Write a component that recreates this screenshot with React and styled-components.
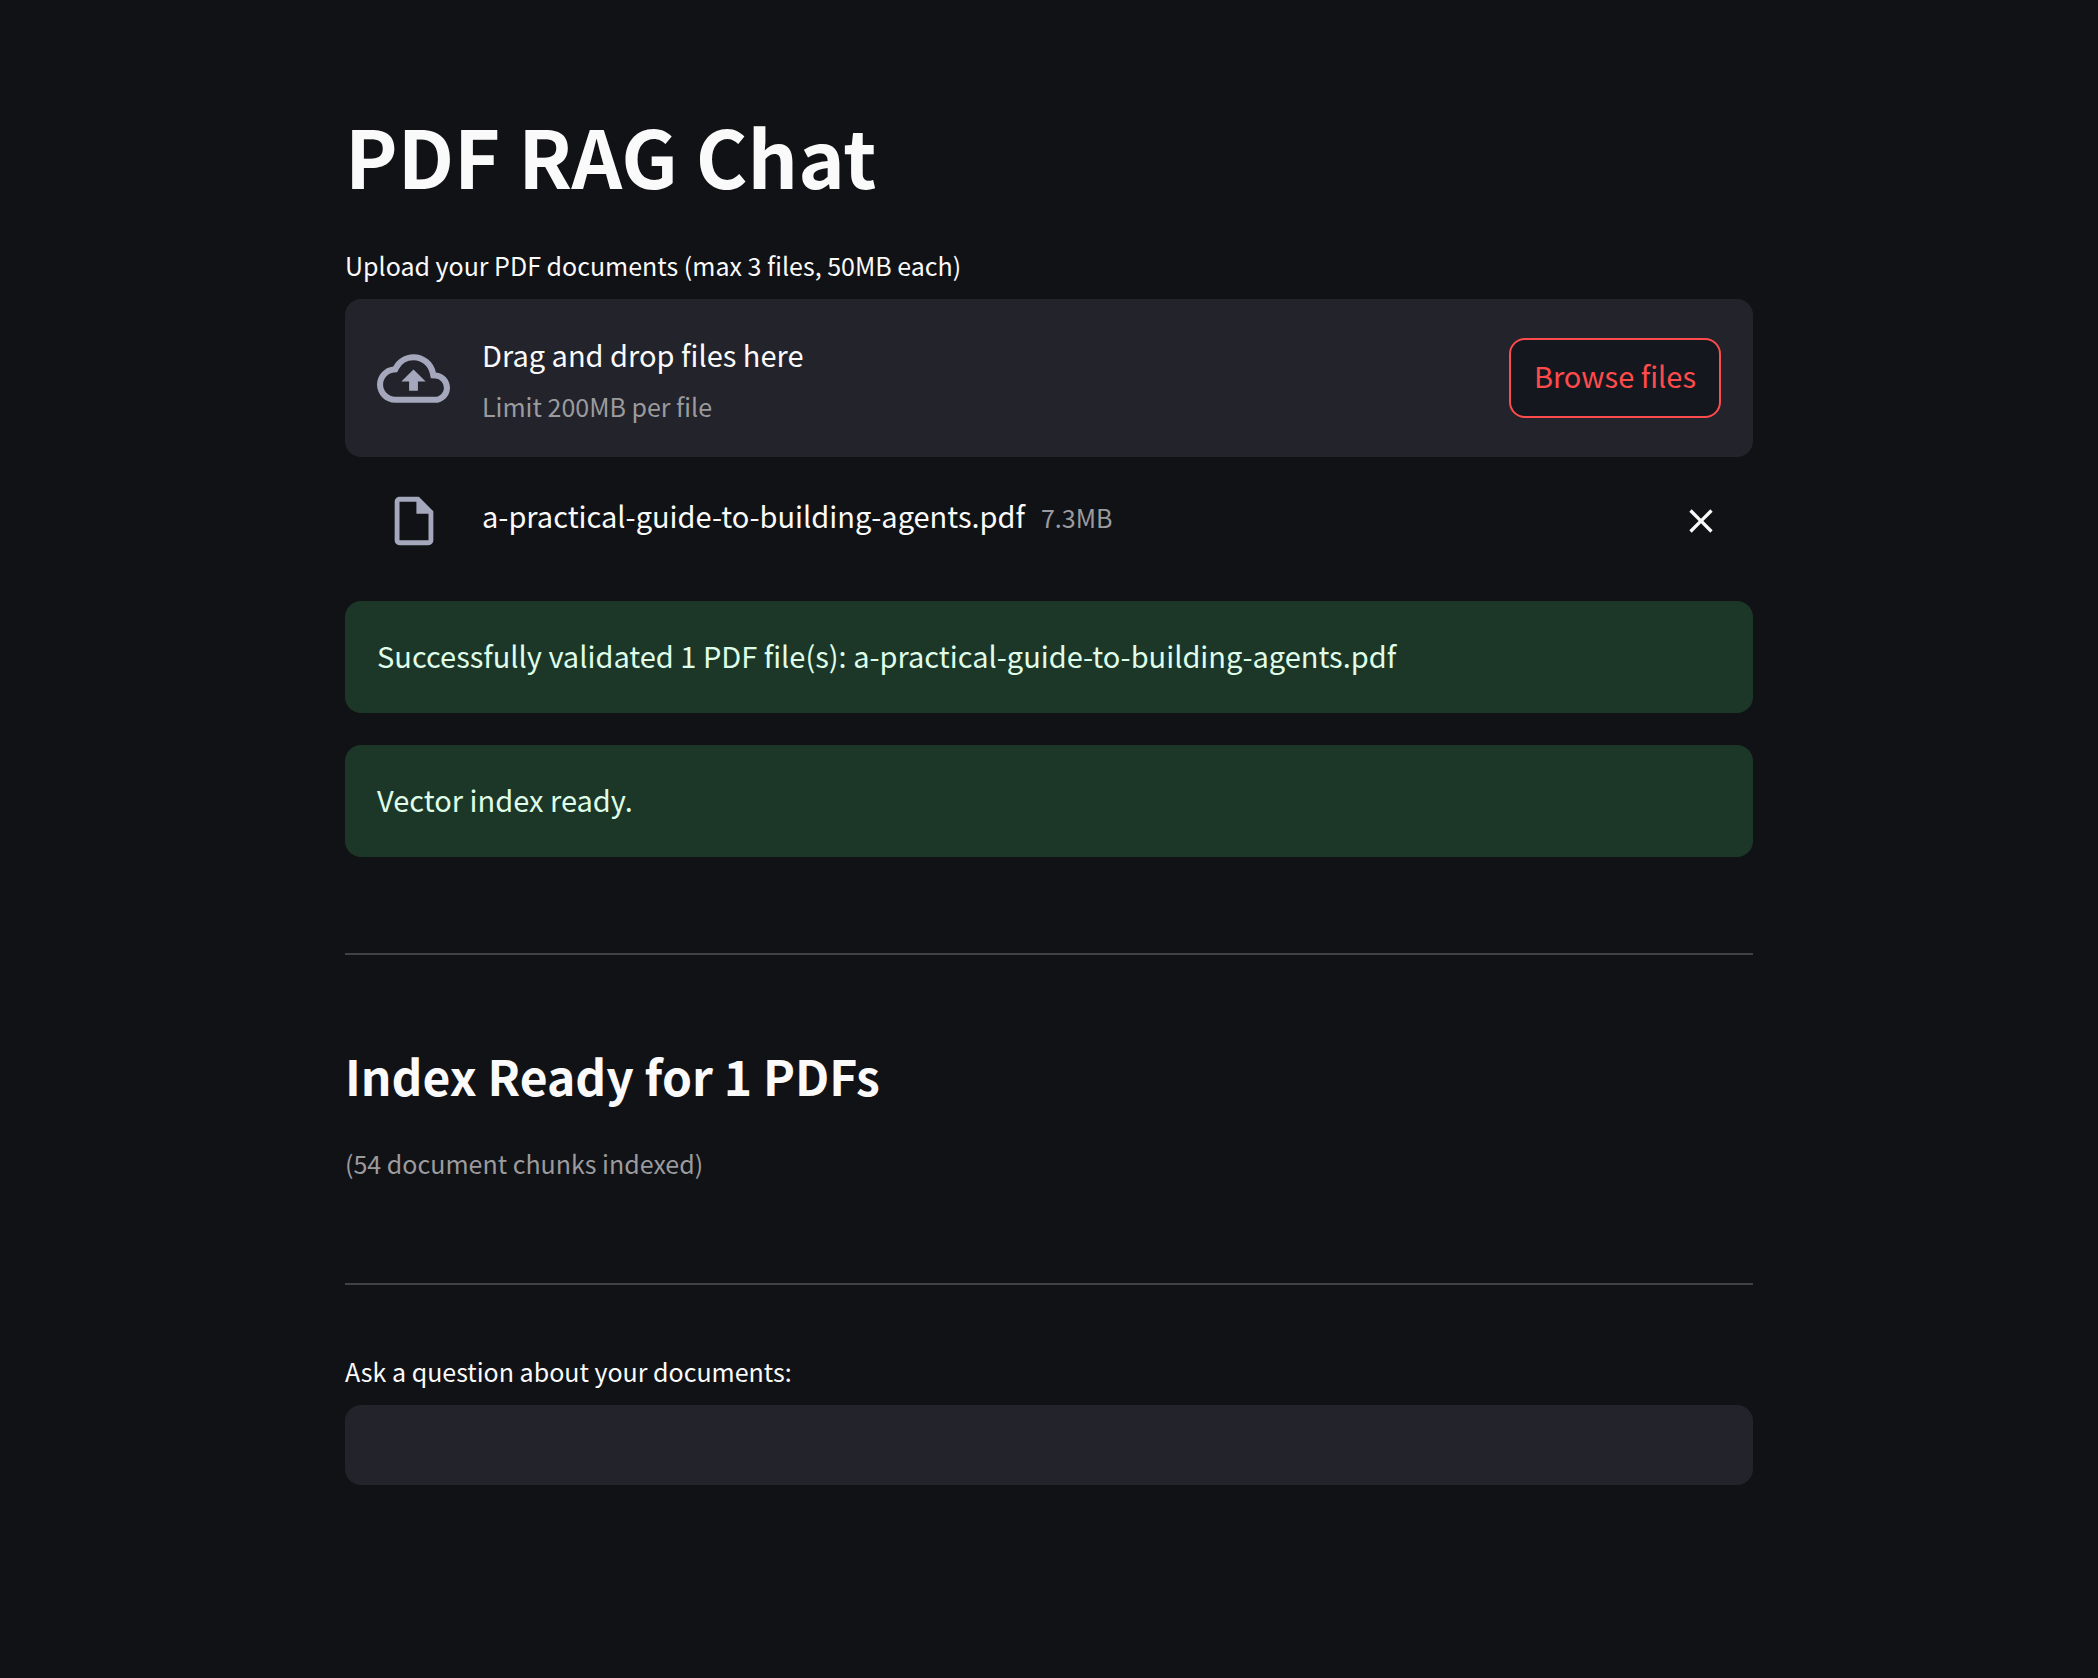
import React, { useRef, useState } from "react";
import styled, { createGlobalStyle, ThemeProvider } from "styled-components";

const theme = {
  background: "#111216",
  surface: "#23232b",
  buttonSurface: "#14171e",
  text: "#fafafa",
  faded: "#9b9b9e",
  icon: "#a5a8bc",
  accent: "#ff4b4b",
  success: "#1c3728",
  successText: "#dffde9",
  rule: "#414246",
};

const GlobalStyle = createGlobalStyle`
  *, *::before, *::after {
    box-sizing: border-box;
  }
  body {
    margin: 0;
    background: ${theme.background};
    color: ${theme.text};
    font-family: "Noto Sans CJK SC", "Noto Sans", sans-serif;
    font-size: 29px;
    line-height: 48px;
  }
  button, input {
    font: inherit;
  }
`;

const Page = styled.main`
  display: flex;
  flex-direction: column;
  width: 100%;
  max-width: 1472px;
  min-height: 100vh;
  margin: 0 auto;
  padding: 102px 32px 96px;
`;

const Title = styled.h1`
  margin: 0 0 37px;
  font-size: 79px;
  font-weight: 700;
  line-height: 106px;
`;

const Subtitle = styled.h2`
  margin: 0 0 33px;
  font-size: 48px;
  font-weight: 700;
  line-height: 70px;
`;

const Field = styled.div`
  display: flex;
  flex-direction: column;
  gap: 14px;
`;

const FieldLabel = styled.label`
  font-size: 25px;
  line-height: 40px;
`;

const Dropzone = styled.section`
  display: flex;
  align-items: center;
  gap: 32px;
  padding: 31px 32px;
  border-radius: 16px;
  background: ${(p) => p.theme.surface};
`;

const IconSlot = styled.span`
  display: flex;
  flex: none;
  align-items: center;
  justify-content: center;
  width: 73px;
  height: 60px;
  color: ${(p) => p.theme.icon};
`;

const Icon = styled.svg`
  display: block;
  flex: none;
  width: ${(p) => p.$size}px;
  height: ${(p) => p.$size}px;
  fill: currentColor;
`;

const Instructions = styled.div`
  display: flex;
  flex: 1;
  flex-direction: column;
  gap: 8px;
`;

const Small = styled.span`
  color: ${(p) => p.theme.faded};
  font-size: 25px;
  line-height: 40px;
`;

const HiddenFileInput = styled.input`
  display: none;
`;

const BrowseButton = styled.button`
  flex: none;
  padding: 11px 23px 17px;
  border: 2px solid ${(p) => p.theme.accent};
  border-radius: 16px;
  background: ${(p) => p.theme.buttonSurface};
  color: ${(p) => p.theme.accent};
  cursor: pointer;
`;

const FileRow = styled.div`
  display: flex;
  align-items: flex-start;
  gap: 32px;
  padding: 34px 32px 50px;
`;

const FileName = styled.div`
  display: flex;
  flex: 1;
  align-items: baseline;
  gap: 16px;
`;

const RemoveButton = styled.button`
  display: flex;
  flex: none;
  align-items: center;
  height: 60px;
  padding: 0;
  border: 0;
  background: none;
  color: ${(p) => p.theme.text};
  cursor: pointer;
`;

const Alerts = styled.div`
  display: flex;
  flex-direction: column;
  gap: 32px;
`;

const Alert = styled.div`
  padding: 30px 32px 34px;
  border-radius: 16px;
  background: ${(p) => p.theme.success};
  color: ${(p) => p.theme.successText};
`;

const Rule = styled.hr`
  width: 100%;
  height: 2px;
  margin: ${(p) => p.$above}px 0 ${(p) => p.$below}px;
  border: 0;
  background: ${(p) => p.theme.rule};
`;

const TextInput = styled.input`
  width: 100%;
  height: 80px;
  padding: 0 24px;
  border: 2px solid ${(p) => p.theme.surface};
  border-radius: 16px;
  outline: none;
  background: ${(p) => p.theme.surface};
  color: ${(p) => p.theme.text};

  &:focus {
    border-color: ${(p) => p.theme.accent};
  }
`;

const icons = {
  upload:
    "M19.35 10.04A7.49 7.49 0 0 0 12 4C9.11 4 6.6 5.64 5.35 8.04A5.994 5.994 0 0 0 0 14c0 3.31 2.69 6 6 6h13c2.76 0 5-2.24 5-5 0-2.64-2.05-4.78-4.65-4.96zM19 18H6c-2.21 0-4-1.79-4-4 0-2.05 1.53-3.76 3.56-3.97l1.07-.11.5-.95A5.469 5.469 0 0 1 12 6c2.62 0 4.88 1.86 5.39 4.43l.3 1.5 1.53.11A2.98 2.98 0 0 1 22 15c0 1.65-1.35 3-3 3zM8 13h2.55v3h2.9v-3H16l-4-4z",
  file: "M14 2H6c-1.1 0-1.99.9-1.99 2L4 20c0 1.1.89 2 1.99 2H18c1.1 0 2-.9 2-2V8l-6-6zM6 20V4h7v5h5v11H6z",
  close:
    "M19 6.41L17.59 5 12 10.59 6.41 5 5 6.41 10.59 12 5 17.59 6.41 19 12 13.41 17.59 19 19 17.59 13.41 12z",
};

function Glyph({ name, size }) {
  return (
    <Icon viewBox="0 0 24 24" $size={size} aria-hidden="true">
      <path d={icons[name]} />
    </Icon>
  );
}

export default function App() {
  const picker = useRef(null);
  const [question, setQuestion] = useState("");

  return (
    <ThemeProvider theme={theme}>
      <GlobalStyle />
      <Page>
        <Title>PDF RAG Chat</Title>

        <Field>
          <FieldLabel htmlFor="documents">
            Upload your PDF documents (max 3 files, 50MB each)
          </FieldLabel>
          <Dropzone>
            <HiddenFileInput ref={picker} id="documents" type="file" accept=".pdf" multiple />
            <IconSlot>
              <Glyph name="upload" size={73} />
            </IconSlot>
            <Instructions>
              <span>Drag and drop files here</span>
              <Small>Limit 200MB per file</Small>
            </Instructions>
            <BrowseButton type="button" onClick={() => picker.current.click()}>
              Browse files
            </BrowseButton>
          </Dropzone>
        </Field>

        <FileRow>
          <IconSlot>
            <Glyph name="file" size={58} />
          </IconSlot>
          <FileName>
            <span>a-practical-guide-to-building-agents.pdf</span>
            <Small>7.3MB</Small>
          </FileName>
          <RemoveButton type="button" aria-label="Remove file">
            <Glyph name="close" size={40} />
          </RemoveButton>
        </FileRow>

        <Alerts>
          <Alert role="status">
            Successfully validated 1 PDF file(s): a-practical-guide-to-building-agents.pdf
          </Alert>
          <Alert role="status">Vector index ready.</Alert>
        </Alerts>

        <Rule $above={96} $below={85} />

        <Subtitle>Index Ready for 1 PDFs</Subtitle>
        <Small>(54 document chunks indexed)</Small>

        <Rule $above={100} $below={66} />

        <Field>
          <FieldLabel htmlFor="question">Ask a question about your documents:</FieldLabel>
          <TextInput
            id="question"
            type="text"
            value={question}
            onChange={(event) => setQuestion(event.target.value)}
          />
        </Field>
      </Page>
    </ThemeProvider>
  );
}
